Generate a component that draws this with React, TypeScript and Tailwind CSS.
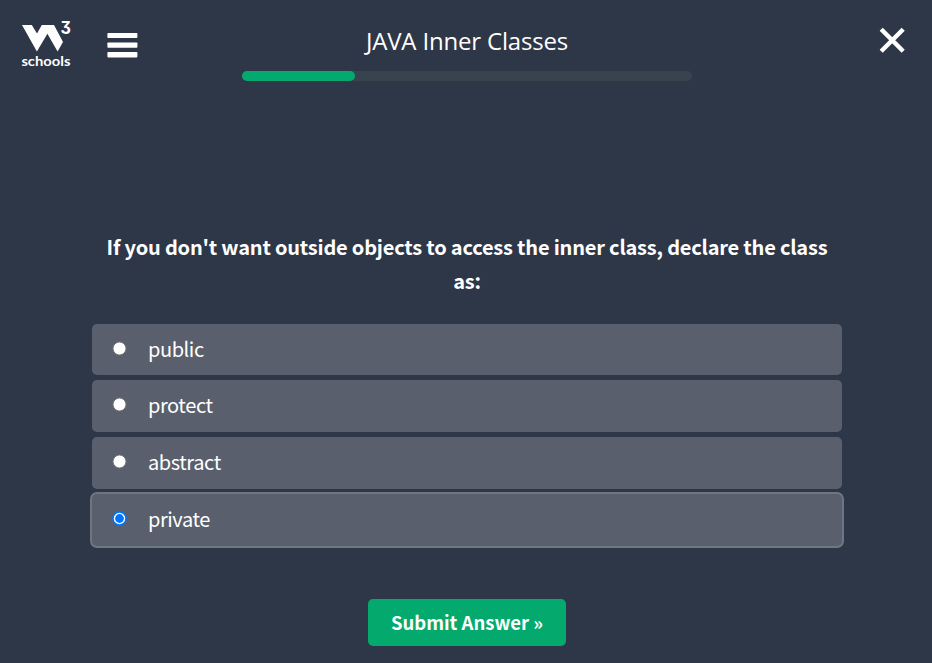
import { useState } from 'react';

const options = [
  { label: 'public', box: 'h-[51px] mb-[5px]' },
  { label: 'protect', box: 'h-[52px] mb-[5px]' },
  { label: 'abstract', box: 'h-[52px] mb-[5px]' },
  { label: 'private', box: 'h-[52px]' },
];

function Logo() {
  return (
    <svg className="ml-[20px] mt-[18px] block h-[52px] w-[54px] shrink-0" viewBox="20 18 54 52" fill="#fff">
      <path d="M22 25H31.8L37 33.6L41.8 25H54L63 42L57.6 51.6L47.4 33.8L36.9 51.6Z" />
      <text x="60.4" y="34" className="font-[Inter,sans-serif] text-[17px] font-bold [font-feature-settings:'cv09']" textLength="10.4" lengthAdjust="spacingAndGlyphs">3</text>
      <text x="21.4" y="66" textLength="49" lengthAdjust="spacingAndGlyphs" className="font-[Lato,sans-serif] text-[13.5px] font-bold">schools</text>
    </svg>
  );
}

export default function App() {
  const [selected, setSelected] = useState('private');
  return (
    <div className="flex h-[663px] w-[932px] flex-col overflow-hidden bg-[#2e3748] font-['Noto_Sans_CJK_SC',sans-serif] text-white">
      <header className="flex h-[90px] shrink-0 items-start">
        <Logo />
        <button aria-label="Menu" className="ml-[33px] mt-[33px] flex w-[31px] shrink-0 flex-col">
          <svg className="block h-[25px] w-[31px]" viewBox="0 0 31 25" fill="#fff">
            <rect x="0.4" y="0" width="30" height="5" rx="0.8" />
            <rect x="0.4" y="9.4" width="30" height="5.4" rx="0.8" />
            <rect x="0.4" y="19" width="30" height="5.4" rx="0.8" />
          </svg>
        </button>
        <div className="ml-[104px] flex w-[450px] shrink-0 flex-col items-center pt-[24px]">
          <h1 className="h-[34px] whitespace-nowrap font-['Open_Sans',sans-serif] text-[24px] leading-[34px] tracking-[-0.18px]">JAVA Inner Classes</h1>
          <div className="mt-[13px] h-[10px] w-full rounded-full bg-[#38444d]">
            <div className="h-full w-[113px] rounded-full bg-[#04aa6d]" />
          </div>
        </div>
        <button aria-label="Close" className="ml-[187px] mt-[27px]">
          <svg className="block h-[27px] w-[27px]" viewBox="0 0 27 27" stroke="#fff" strokeWidth="4.4">
            <path d="M2.2 2.2L24.2 24.2M24.2 2.2L2.2 24.2" />
          </svg>
        </button>
      </header>
      <main className="ml-[92px] flex w-[750px] flex-col pt-[140px]">
        <h2 className="h-[68px] text-center text-[20px] font-bold leading-[34px] tracking-[-0.2px]">
          If you don't want outside objects to access the inner class, declare the class
          <br />
          as:
        </h2>
        <div className="mt-[26px] flex flex-col">
          {options.map(({ label, box }) => {
            const on = selected === label;
            return (
              <label
                key={label}
                className={`flex cursor-pointer items-center rounded-[5px] bg-[#595f6c] pl-[20px] ${box} ${on ? 'ring-2 ring-[#6d7781]' : ''}`}
              >
                <input type="radio" name="answer" className="sr-only" checked={on} onChange={() => setSelected(label)} />
                <svg className="mb-[3px] block h-[15px] w-[15px]" viewBox="0 0 15 15">
                  <circle cx="7.5" cy="7.5" r="6.5" fill="#fff" stroke={on ? '#0075ff' : '#767676'} strokeWidth={on ? 1.5 : 1} />
                  {on && <circle cx="7.5" cy="7.5" r="4.4" fill="#0075ff" />}
                </svg>
                <span className="mb-[2px] ml-[20.9px] text-[20px] leading-[34px] tracking-[-0.4px]">{label}</span>
              </label>
            );
          })}
        </div>
        <button className="mt-[53px] h-[47px] w-[198px] self-center rounded-[5px] bg-[#04aa6d] text-[18.5px] font-bold">
          Submit Answer »
        </button>
      </main>
    </div>
  );
}
